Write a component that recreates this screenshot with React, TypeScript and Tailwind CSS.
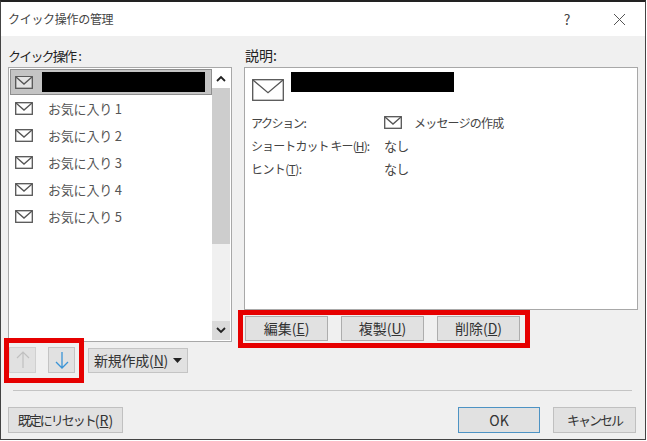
import React from "react";

const font = { fontFamily: '"Noto Sans CJK JP", "Liberation Sans", sans-serif' };

function Mail({ w = 18, h = 13, fill = "none" }: { w?: number; h?: number; fill?: string }) {
  return (
    <svg width={w} height={h} viewBox={`0 0 ${w} ${h}`} fill={fill} stroke="#555" strokeWidth="1.3" className="shrink-0">
      <rect x="0.7" y="0.7" width={w - 1.4} height={h - 1.4} />
      <path d={`M1 1 L${w / 2} ${h * 0.62} L${w - 1} 1`} />
    </svg>
  );
}

function Btn({ children, className = "" }: { children: React.ReactNode; className?: string }) {
  return <div className={`flex items-center justify-center border bg-[#e1e1e1] text-[#333] ${className}`}>{children}</div>;
}

function Key({ children }: { children: React.ReactNode }) {
  return <span className="underline">{children}</span>;
}

const items = ["お気に入り 1", "お気に入り 2", "お気に入り 3", "お気に入り 4", "お気に入り 5"];

export default function App() {
  return (
    <div style={font} className="h-[441px] w-[647px] overflow-hidden bg-white">
      <div className="relative flex h-[440px] w-[646px] flex-col border-t-2 border-r border-b border-l border-t-[#222] border-r-[#444] border-b-[#444] border-l-[#444] bg-[#f0f0f0] text-[#333]">
        <div className="flex h-[34px] shrink-0 items-center bg-white pl-[7px] text-[12px] tracking-[-0.3px] text-[#444]">
          <span className="flex-1">クイック操作の管理</span>
          <span className="mr-[43px] text-[14px]">?</span>
          <svg width="13" height="13" viewBox="0 0 13 13" stroke="#555" strokeWidth="1" className="mr-[19px]">
            <path d="M1 1 L12 12 M12 1 L1 12" />
          </svg>
        </div>

        <div className="flex flex-1 flex-col px-[7px] pt-[10px]">
          <div className="flex h-[296px] gap-[12px]">
            <div className="flex w-[224px] shrink-0 flex-col">
              <div className="h-[21px] text-[13px] leading-[19px] text-[#222]">
                <span className="tracking-[-1.8px]">クイック操作</span>
                <span className="ml-[3px]">:</span>
              </div>
              <div className="flex h-[275px] border border-[#a8a8a8] bg-white p-[1px]">
                <div className="flex-1">
                  <div className="flex h-[26px] items-center border border-[#8f8f8f] bg-[#c4c4c4] pl-[4px]">
                    <Mail fill="#e4e4e4" />
                    <div className="ml-[9px] h-[20px] w-[163px] bg-black" />
                  </div>
                  {items.map((t) => (
                    <div key={t} className="flex h-[27px] items-center pl-[5px] text-[13px] tracking-[-0.2px] text-[#555]">
                      <Mail />
                      <span className="ml-[15px]">{t}</span>
                    </div>
                  ))}
                </div>
                <div className="flex w-[18px] flex-col">
                  <svg width="18" height="19" viewBox="0 0 18 19" fill="none" stroke="#222" strokeWidth="1.8">
                    <path d="M5 12 L9 8 L13 12" />
                  </svg>
                  <div className="h-[156px] bg-[#cdcdcd]" />
                  <div className="flex-1 bg-[#f0f0f0]" />
                  <div className="flex h-[19px] items-center justify-center bg-[#dadada]">
                    <svg width="18" height="19" viewBox="0 0 18 19" fill="none" stroke="#222" strokeWidth="1.8">
                      <path d="M5 7 L9 11 L13 7" />
                    </svg>
                  </div>
                </div>
              </div>
            </div>

            <div className="flex w-[394px] shrink-0 flex-col">
              <div className="h-[21px] pl-[1px] text-[14px] leading-[19px] text-[#222]">説明:</div>
              <div className="h-[243px] border border-[#a8a8a8] bg-white pl-[7px]">
                <div className="flex h-[36px] items-start">
                  <div className="mt-[11px]">
                    <Mail w={32} h={22} />
                  </div>
                  <div className="ml-[7px] mt-[4px] h-[20px] w-[163px] bg-black" />
                </div>
                <div className="grid grid-cols-[132px_1fr] text-[12px] leading-[23px] text-[#444]">
                  <span className="mt-[7px] -ml-[1px] tracking-[-1.4px]">
                    アクション<span className="tracking-normal">:</span>
                  </span>
                  <span className="mt-[7px] flex items-center">
                    <Mail />
                    <span className="ml-[12px] tracking-[-0.8px]">メッセージの作成</span>
                  </span>
                  <span className="-ml-[1px] tracking-[-0.9px]">
                    ショートカット キー(<Key>H</Key>):
                  </span>
                  <span className="tracking-[-0.8px] text-[13px]">なし</span>
                  <span className="-ml-[1px] tracking-[-0.6px]">
                    ヒント(<Key>T</Key>):
                  </span>
                  <span className="tracking-[-0.8px] text-[13px]">なし</span>
                </div>
              </div>
              <div className="mt-[6px] flex gap-[13px] pl-[1px]">
                <Btn className="h-[25px] w-[83px] border-[#adadad] text-[14px]">
                  <span>編集(<Key>E</Key>)</span>
                </Btn>
                <Btn className="h-[25px] w-[83px] border-[#adadad] text-[14px]">
                  <span>複製(<Key>U</Key>)</span>
                </Btn>
                <Btn className="h-[25px] w-[83px] border-[#adadad] text-[14px]">
                  <span>削除(<Key>D</Key>)</span>
                </Btn>
              </div>
            </div>
          </div>

          <div className="mt-[5px] flex items-center pl-[1px]">
            <Btn className="h-[26px] w-[27px] border-[#d0d0d0]">
              <svg width="14" height="20" viewBox="0 0 14 20" fill="none" stroke="#c0c0c0" strokeWidth="1.2">
                <path d="M7 18 V2 M1 8 L7 2 L13 8" />
              </svg>
            </Btn>
            <Btn className="ml-[12px] h-[26px] w-[27px] border-[#c4c4c4]">
              <svg width="14" height="20" viewBox="0 0 14 20" fill="none" stroke="#3a94d6" strokeWidth="1.3">
                <path d="M7 2 V18 M1 12 L7 18 L13 12" />
              </svg>
            </Btn>
            <Btn className="ml-[13px] h-[25px] w-[100px] gap-[5px] border-[#c4c4c4] text-[14px]">
              <span className="tracking-[-0.2px]">新規作成(<Key>N</Key>)</span>
              <svg width="9" height="5" viewBox="0 0 9 5" fill="#222">
                <path d="M0 0 H9 L4.5 5 Z" />
              </svg>
            </Btn>
          </div>

          <div className="ml-[5px] mt-[17px] h-[1px] w-[619px] bg-[#c4c4c4]" />

          <div className="mt-[16px] flex items-center">
            <Btn className="h-[26px] w-[115px] border-[#c0c0c0] text-[13px]">
              <span className="tracking-[-2px]">既定にリセット</span>
              <span className="text-[14px]">(<Key>R</Key>)</span>
            </Btn>
            <Btn className="ml-[335px] h-[26px] w-[82px] border-[#4d93c4] text-[14px]">OK</Btn>
            <Btn className="ml-[13px] h-[26px] w-[83px] border-[#c0c0c0] text-[13px] tracking-[-2px]">キャンセル</Btn>
          </div>
        </div>

        <div className="absolute left-[3px] top-[336px] h-[45px] w-[80px] border-[5px] border-[#e60000]" />
        <div className="absolute left-[237px] top-[308px] h-[38px] w-[292px] border-[5px] border-[#e60000]" />
      </div>
    </div>
  );
}
